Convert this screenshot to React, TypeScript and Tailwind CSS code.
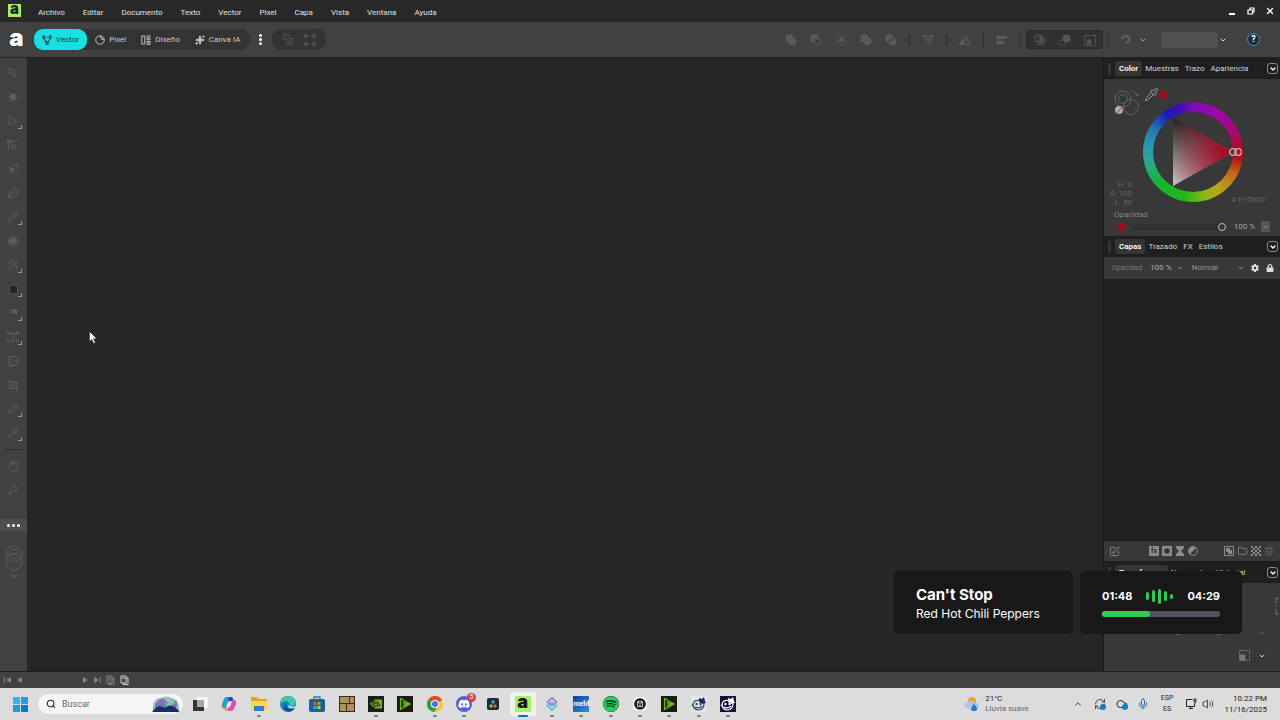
import React, { useState } from 'react';
import {
  ChevronDown, ChevronUp, Cloud, Folder, Hand, Image as ImageIcon, Mic, Pencil, Pipette, RefreshCw,
  Search, Sparkles, SquarePen, Trash2, Volume2, X, Wand2,
} from 'lucide-react';
import { FaDiscord, FaSpotify, FaLock } from 'react-icons/fa';
import { FaGear } from 'react-icons/fa6';
import { BsNvidia } from 'react-icons/bs';

const MENUS = ['Archivo', 'Editar', 'Documento', 'Texto', 'Vector', 'Píxel', 'Capa', 'Vista', 'Ventana', 'Ayuda'];

const VectorIcon = () => (
  <svg className="w-[10px] h-[10px]" viewBox="0 0 20 20" fill="none" stroke="currentColor" strokeWidth="2.2">
    <circle cx="3.500" cy="4" r="2.4" /><circle cx="16.500" cy="4" r="2.4" /><circle cx="10" cy="16.500" r="2.4" />
    <path d="M4 6.500c0 5 4 4 5 8M16 6.500c0 5-4 4-5 8M9 4.500h2" />
  </svg>
);

const PixelIcon = () => (
  <svg className="w-[10px] h-[10px]" viewBox="0 0 20 20" fill="none" stroke="currentColor" strokeWidth="1.8">
    <circle cx="10" cy="10" r="8.5" /><path d="M11 2v4h3v3h4" />
  </svg>
);

const LayoutIcon = () => (
  <svg className="w-[10px] h-[10px]" viewBox="0 0 20 20" fill="none" stroke="currentColor" strokeWidth="1.9">
    <path d="M1.5 2h6v16h-6zM11 2h8M12 5.500h6v4h-6zM11 13h8M11 16h8M11 18.500h8" />
  </svg>
);

const MODES = [
  { name: 'Vector', icon: <VectorIcon /> },
  { name: 'Píxel', icon: <PixelIcon /> },
  { name: 'Diseño', icon: <LayoutIcon /> },
  { name: 'Canva IA', icon: <Sparkles className="w-[10px] h-[10px]" fill="currentColor" /> },
];

/* Boolean operation glyphs */
const BoolIcon = ({ kind }: { kind: string }) => (
  <svg className="w-3 h-3" viewBox="0 0 24 24" fill="none" stroke="#5b5b5b" strokeWidth="2">
    {kind === 'add' && <><rect x="2" y="2" width="13" height="13" rx="2" fill="#5b5b5b" /><circle cx="15" cy="15" r="7" fill="#5b5b5b" /></>}
    {kind === 'subtract' && <><rect x="2" y="2" width="13" height="13" rx="2" fill="#5b5b5b" /><circle cx="15" cy="15" r="7" fill="#414141" /></>}
    {kind === 'intersect' && <><rect x="2" y="2" width="13" height="13" rx="2" strokeDasharray="3 2" /><circle cx="15" cy="15" r="7" strokeDasharray="3 2" /><path d="M15 8v7H8a7 7 0 0 1 7-7z" fill="#5b5b5b" /></>}
    {kind === 'xor' && <><rect x="2" y="2" width="13" height="13" rx="2" fill="#5b5b5b" /><circle cx="15" cy="15" r="7" fill="#5b5b5b" /><path d="M14 9v5H9q0-4 5-5z" fill="#333" /></>}
    {kind === 'divide' && <><rect x="2" y="2" width="13" height="13" rx="2" fill="#5b5b5b" /><circle cx="15" cy="15" r="7" fill="#5b5b5b" /><path d="M14 9v5H9q0-4 5-5z" stroke="#3c3c3c" /></>}
    {kind === 'behind' && <><rect x="2" y="2" width="13" height="13" rx="1" /><path d="M14 6a8 8 0 1 1-8 8M7 7h7v7" /><circle cx="14" cy="14" r="4" /></>}
  </svg>
);

const ToolGlyph = ({ children }: { children: React.ReactNode }) => (
  <svg className="w-3 h-3" viewBox="0 0 24 24" fill="none" stroke="currentColor" strokeWidth="2">{children}</svg>
);

const TOOLS: { name: string; icon: React.ReactNode; more?: boolean }[] = [
  { name: 'Mover', icon: <ToolGlyph><path d="M4 3l7 2 7 8-5 1 5 7M4 3v11l4-3 5 9h5" /></ToolGlyph> },
  { name: 'Mesa de trabajo', icon: <ToolGlyph><circle cx="12" cy="12" r="6" fill="currentColor" /><path d="M3 3l4 4M20 4l-3 3M3 21l4-4M21 21l-4-4M1 12h3M20 12h3M12 20v3" /></ToolGlyph> },
  { name: 'Nodo', more: true, icon: <ToolGlyph><path d="M5 3l15 11-9 1-6 6z" /></ToolGlyph> },
  { name: 'Esquina', icon: <ToolGlyph><path d="M3 22V5h19M1 2h6v6H1zM10 9l10 8-6 1-4 4z" /></ToolGlyph> },
  { name: 'Contorno', icon: <ToolGlyph><circle cx="11" cy="13" r="9" strokeDasharray="4 3" /><circle cx="11" cy="13" r="4" fill="currentColor" /><circle cx="20" cy="4" r="2" /></ToolGlyph> },
  { name: 'Pluma', icon: <ToolGlyph><path d="M2 22L5 10l8-7h6l3 4-2 8-7 6zM3 21l9-9" /><circle cx="13" cy="11" r="2" /></ToolGlyph> },
  { name: 'Lápiz', more: true, icon: <Pencil className="w-3 h-3" /> },
  { name: 'Relleno', icon: <ToolGlyph><rect x="3" y="3" width="18" height="18" rx="6" /><circle cx="12" cy="12" r="6" fill="currentColor" /></ToolGlyph> },
  { name: 'Varita', more: true, icon: <Wand2 className="w-3 h-3" /> },
  { name: 'Rectángulo', more: true, icon: <span className="w-[9px] h-[9px] bg-[#252525] border border-[#505050]" /> },
  { name: 'Transparencia', more: true, icon: <ToolGlyph><path d="M5 5h7v7H5z" strokeDasharray="2 2" /><path d="M10 5h9v9l-5-4-4 4z" fill="currentColor" /></ToolGlyph> },
  { name: 'Texto', more: true, icon: <ToolGlyph><path d="M1 2h4v4H1zM19 2h4v4h-4zM1 18h4v4H1zM19 18h4v4h-4zM6 7h12M12 7v14M9 21h6M5 4h14" /></ToolGlyph> },
  { name: 'Imagen', icon: <ImageIcon className="w-3 h-3" /> },
  { name: 'Recorte', icon: <ToolGlyph><path d="M5 1v18h18M1 5h18v18M5 19L19 5" /><path d="M9 9h6v6H9z" strokeDasharray="2 2" /></ToolGlyph> },
  { name: 'Medida', more: true, icon: <ToolGlyph><path d="M2 17L17 2l5 5L7 22zM14 5l5 5M6 18l2-2" /></ToolGlyph> },
  { name: 'Cuentagotas', more: true, icon: <Pipette className="w-3 h-3" /> },
];

const ToolButton = ({ name, icon, more }: { name: string; icon: React.ReactNode; more?: boolean }) => (
  <button aria-label={name} className="relative w-full h-6 shrink-0 pr-px flex items-center justify-center text-[#5c5c5c]">
    {icon}
    {more && <span className="absolute right-[5px] bottom-[4px] w-[4px] h-[4px] border-r border-b border-[#929292]" />}
  </button>
);

const Separator = () => <span className="w-px h-3 bg-[#2b2b2b]" />;

const PanelTabs = ({ tabs }: { tabs: string[] }) => (
  <header className="h-[21px] shrink-0 bg-[#1f1f1f] flex items-center pl-1 pr-[2px] text-[8px] text-[#d2d2d2]">
    <span className="w-[3px] h-3 bg-[#343434] mr-1" />
    <div className="flex items-center">
      {tabs.map((t, i) => (
        <button key={t} className={`h-[15px] rounded-[3px] ${i === 0 ? 'px-1 bg-[#353535] text-white font-semibold' : 'px-[3px]'}`}>{t}</button>
      ))}
    </div>
    <button aria-label="Opciones del panel" className="ml-auto w-[11px] h-[11px] rounded-[3px] border border-[#8a8a8a] flex items-center justify-center text-white">
      <ChevronDown className="w-2 h-2" strokeWidth={4} />
    </button>
  </header>
);

const ColorWheel = () => (
  <div className="relative w-[100px] h-[100px] rounded-full bg-[conic-gradient(#7a0cb4_0deg,#a406a4_35deg,#a3087a_60deg,#b00c28_85deg,#b50f16_98deg,#c06a18_118deg,#b9a51c_145deg,#8fb51a_165deg,#22b818_190deg,#18b52a_225deg,#28a88c_255deg,#289caa_275deg,#2478b4_300deg,#1c1cae_325deg,#3a10b4_342deg,#7a0cb4_360deg)]">
    <div className="absolute inset-[10px] rounded-full bg-[#383838]" />
    <svg className="absolute inset-0 w-full h-full overflow-visible" viewBox="0 0 100 100">
      <defs>
        <linearGradient id="shade" x1="0" y1="0" x2="0" y2="1">
          <stop offset="0" stopColor="#202020" /><stop offset="1" stopColor="#cfc6c8" />
        </linearGradient>
        <linearGradient id="hue" x1="0" y1="0" x2="1" y2="0">
          <stop offset="0" stopColor="#a80a24" stopOpacity="0" /><stop offset="0.85" stopColor="#a80a24" />
        </linearGradient>
      </defs>
      <path d="M30 16v68l60-34z" fill="url(#shade)" />
      <path d="M30 16v68l60-34z" fill="url(#hue)" />
      <g fill="none" stroke="#c9b4b4" strokeWidth="1.2">
        <circle cx="90" cy="50" r="3.300" /><circle cx="95" cy="50" r="3.300" />
      </g>
    </svg>
  </div>
);

const ColorPanel = () => {
  const [opacity, setOpacity] = useState(100);
  return (
    <section>
      <PanelTabs tabs={['Color', 'Muestras', 'Trazo', 'Apariencia']} />
      <div className="h-[157px] pt-2 pl-[10px] pr-[10px] text-[8px] text-[#a5a5a5] flex flex-col">
        <div className="relative flex">
          <svg className="w-[26px] h-[28px]" viewBox="0 0 26 28" fill="none" stroke="#616161" strokeWidth="1">
            <circle cx="9" cy="12" r="8" /><circle cx="9" cy="12" r="4.500" /><circle cx="17" cy="20" r="7.500" />
            <path d="M17 4q5 0 6 5m-2-2l2 2 2-2" />
            <circle cx="5" cy="23" r="4" fill="#b9a8ac" stroke="none" /><path d="M3 26l5-6" stroke="#9b3344" />
          </svg>
          <Pipette className="w-[15px] h-[15px] ml-1 text-[#a3a3a3]" strokeWidth={1.6} />
          <span className="w-2 h-2 rounded-full bg-[#a00d22] mt-1" />
          <div className="absolute left-[29px] top-[15px]"><ColorWheel /></div>
        </div>
        <div className="mt-[65px] flex justify-between items-end text-[#636363] leading-[9px]">
          <div className="w-[18px] flex flex-col items-end whitespace-nowrap">
            <div>H: 0</div><div>S: 100</div><div>L: 50</div>
          </div>
          <span className="pr-[5px] pb-[3px]"># FF0000</span>
        </div>
        <label htmlFor="opacity" className="mt-[3px] leading-[10px] text-[#858585]">Opacidad</label>
        <div className="flex items-center h-[13px] pl-1">
          <span className="w-2 h-2 mr-[6px] rounded-full bg-[#a00d22]" />
          <input
            id="opacity"
            type="range"
            value={opacity}
            onChange={e => setOpacity(Number(e.target.value))}
            className="flex-1 min-w-0 h-[6px] rounded-full appearance-none bg-[#303030] [&::-webkit-slider-thumb]:appearance-none [&::-webkit-slider-thumb]:w-2 [&::-webkit-slider-thumb]:h-2 [&::-webkit-slider-thumb]:rounded-full [&::-webkit-slider-thumb]:border [&::-webkit-slider-thumb]:border-[#c4c4c4] [&::-webkit-slider-thumb]:bg-[#333]"
          />
          <span className="ml-2">{opacity} %</span>
          <button aria-label="Ajustar opacidad" className="ml-[6px] w-[9px] h-[11px] bg-[#555] flex items-center justify-center"><ChevronDown className="w-2 h-2" /></button>
        </div>
      </div>
    </section>
  );
};

const LayersPanel = () => (
  <section className="flex-1 flex flex-col min-h-0">
    <PanelTabs tabs={['Capas', 'Trazado', 'FX', 'Estilos']} />
    <div className="h-[22px] shrink-0 flex items-center pl-2 pr-[6px] text-[8px] text-[#b0b0b0]">
      <span className="text-[7px] text-[#7d7d7d]">Opacidad:</span>
      <span className="ml-[7px]">100 %</span>
      <ChevronDown className="w-2 h-2 ml-1" />
      <div className="ml-2 flex-1 min-w-0 flex items-center">
        <select aria-label="Modo de fusión" className="flex-1 min-w-0 h-4 appearance-none bg-transparent text-[#969696]"><option>Normal</option></select>
        <ChevronDown className="w-2 h-2" />
      </div>
      <button aria-label="Ajustes de capa" className="ml-[6px] text-[#dedede]"><FaGear className="w-2 h-2" /></button>
      <button aria-label="Bloquear" className="ml-[7px] text-[#dedede]"><FaLock className="w-2 h-2" /></button>
    </div>
    <div className="flex-1 bg-[#202020]" />
    <div className="h-[21px] shrink-0 flex items-center pl-[5px] pr-[6px] text-[#8b8b8b] border-b border-[#1c1c1c]">
      <button aria-label="Editar"><SquarePen className="w-[11px] h-[11px]" /></button>
      <div className="ml-auto flex gap-[3px]">
        <button aria-label="Efectos" className="w-[10px] h-[10px] bg-[#8b8b8b] text-[7px] leading-[9px] font-bold text-[#333]">fx</button>
        <button aria-label="Máscara"><svg className="w-[10px] h-[10px]" viewBox="0 0 10 10"><rect width="10" height="10" fill="currentColor" /><circle cx="5" cy="5" r="2.700" fill="#333" /></svg></button>
        <button aria-label="Filtro"><svg className="w-[10px] h-[10px]" viewBox="0 0 10 10" fill="currentColor"><path d="M1 0h8v2L6 5l3 3v2H1V8l3-3-3-3z" /></svg></button>
        <button aria-label="Ajuste"><svg className="w-[10px] h-[10px]" viewBox="0 0 10 10"><circle cx="5" cy="5" r="4.400" fill="none" stroke="currentColor" /><path d="M8.200 1.800a4.500 4.500 0 0 0-6.400 6.400z" fill="currentColor" /></svg></button>
      </div>
      <div className="ml-[26px] flex gap-[3px]">
        <button aria-label="Nueva capa"><svg className="w-[10px] h-[10px]" viewBox="0 0 10 10"><path d="M.5.5h9v9h-9z" fill="none" stroke="currentColor" /><path d="M2 2h4v2h2v4H4V6H2z" fill="currentColor" /></svg></button>
        <button aria-label="Grupo"><Folder className="w-[11px] h-[10px]" /></button>
        <button aria-label="Píxeles"><svg className="w-[10px] h-[10px]" viewBox="0 0 10 10" fill="currentColor"><path d="M0 0h2v2H0zM4 0h2v2H4zM8 0h2v2H8zM2 2h2v2H2zM6 2h2v2H6zM0 4h2v2H0zM4 4h2v2H4zM8 4h2v2H8zM2 6h2v2H2zM6 6h2v2H6zM0 8h2v2H0zM4 8h2v2H4zM8 8h2v2H8z" /></svg></button>
        <button aria-label="Eliminar" className="text-[#696969]"><Trash2 className="w-[10px] h-[10px]" /></button>
      </div>
    </div>
  </section>
);

const TransformPanel = () => (
  <section className="h-[109px] shrink-0 flex flex-col">
    <PanelTabs tabs={['Transformar', 'Navegador', 'Historial']} />
    <div className="flex-1 flex flex-col justify-between items-end pt-3 pb-[10px] text-[#777]">
      <svg className="w-[6px] h-[22px]" viewBox="0 0 6 22" fill="none" stroke="currentColor"><path d="M5 3H2v5M2 14v5h3M1 11h1" /></svg>
      <div className="flex flex-col gap-3 pr-[14px] items-end">
        <div className="flex items-center gap-8 text-[8px] leading-[10px]">
          <span>0 °</span><span>0 °</span>
          <ChevronDown className="w-2 h-2" />
        </div>
        <div className="flex items-center gap-2">
          <svg className="w-[11px] h-[11px]" viewBox="0 0 11 11" fill="none" stroke="currentColor"><path d="M.5.5h10v10h-10z" strokeDasharray="2 1" /><path d="M1 5h5v5H1z" fill="currentColor" /></svg>
          <ChevronDown className="w-2 h-2 text-[#d0d0d0]" strokeWidth={3} />
        </div>
      </div>
    </div>
  </section>
);

const BARS = ['h-2', 'h-3', 'h-[15px]', 'h-[10px]', 'h-[5px]'];

const NowPlaying = () => (
  <aside className="absolute right-[38px] bottom-[86px] flex gap-[7px] text-white font-['Inter',sans-serif]">
    <div className="w-[179px] h-[63px] rounded-[5px] bg-[#181818] pl-[22px] pt-[2px] flex flex-col justify-center">
      <p className="text-[15px] leading-5 font-bold">Can't Stop</p>
      <p className="text-[12px] leading-[18px]">Red Hot Chili Peppers</p>
    </div>
    <div className="w-[162px] h-[63px] rounded-[5px] bg-[#181818] px-[22px] pt-[17px]">
      <div className="h-4 flex items-center justify-between text-[11px] font-bold">
        <span>01:48</span>
        <div className="flex items-center gap-[3px]">
          {BARS.map((h, i) => <span key={i} className={`w-[3px] rounded-full bg-[#2fcb55] ${h}`} />)}
        </div>
        <span>04:29</span>
      </div>
      <div className="mt-[7px] h-[6px] rounded-full bg-[#505461]">
        <div className="h-full w-[41%] rounded-full bg-[#2fcb55]" />
      </div>
    </div>
  </aside>
);

const StreamIcon = () => (
  <svg className="w-4 h-4" viewBox="0 0 16 16"><path d="M0 0h16v16H0z" fill="#171c17" /><path d="M3.500 2.500L13 8l-9.500 5.500zM5.500 6l6 2-6 0M5.500 10.500L11 8" fill="none" stroke="#76b817" strokeWidth="1.200" /></svg>
);

const CatIcon = ({ dark }: { dark?: boolean }) => (
  <svg className="w-4 h-4" viewBox="0 0 16 16">
    <path d="M0 0h16v16H0z" fill={dark ? '#130f3b' : '#e4e6ef'} />
    <g fill="none" stroke={dark ? '#fff' : '#374568'} strokeWidth="1.200">
      <path d="M8 4.500Q3 4 2 8L1 10M2 8q0 6 6 6 5-1 5-6M4 11q4 2 7-1" /><circle cx="5.500" cy="8" r=".6" /><circle cx="9.500" cy="8" r=".6" />
    </g>
    <path d="M8 2l3 1 2-2 1 4 1 2-3 1-4-2z" fill={dark ? '#fff' : '#202b62'} />
  </svg>
);

const APPS: { name: string; open?: boolean; active?: boolean; icon: React.ReactNode }[] = [
  { name: 'Vista de tareas', icon: <svg className="w-4 h-4" viewBox="0 0 16 16"><path d="M5 1h11v11H5z" fill="#f7f7f7" /><path d="M1 4h4v7h7v4H1z" fill="#343434" /><path d="M5 4h7v7H5z" fill="#a8a8a8" /></svg> },
  { name: 'Copilot', icon: <svg className="w-4 h-4" viewBox="0 0 16 16"><path d="M5 1h5q2 0 2 2l1 2H9Q7 5 6 8l-1 4H3Q0 12 1 8l2-5q1-2 2-2z" fill="#259fd8" /><path d="M8 1h2q2 0 2 2l1 2H9q-2 0-2-2z" fill="#3044ba" /><path d="M13 4q3 0 2 4l-2 5q-1 2-3 2H6q-2 0-2-3h3q2 0 3-3l1-5z" fill="#d453b3" /><path d="M1 9l1 3h5q-1 3 2 3H6q-2 0-3-2-3 0-2-4z" fill="#e9a83c" /><path d="M7 7h2L8 10H6z" fill="#eee" /></svg> },
  { name: 'Explorador', open: true, icon: <svg className="w-4 h-4" viewBox="0 0 16 16"><path d="M0 2q0-1 1-1h5l2 2h7q1 0 1 1v10H0z" fill="#e2a322" /><path d="M0 5h16v9q0 1-1 1H1q-1 0-1-1z" fill="#ffd557" /><path d="M3 10h10v5H3z" fill="#2585cc" /></svg> },
  { name: 'Edge', icon: <svg className="w-4 h-4" viewBox="0 0 16 16"><circle cx="8" cy="8" r="8" fill="#1682c5" /><path d="M0 8C0 2 4 0 8 0c5 0 8 3 8 6 0 4-5 5-7 3 2-3-4-6-9-1z" fill="#40c5a6" /><path d="M6 8c0 5 4 6 9 4-3 5-11 5-11-1 0-2 1-3 2-3z" fill="#0b4f9c" /><path d="M9 9q2 3 7 1l-1 2q-5 1-7-1z" fill="#dadada" /></svg> },
  { name: 'Store', icon: <svg className="w-4 h-4" viewBox="0 0 16 16"><path d="M5 4V1h6v3" fill="none" stroke="#1b84be" strokeWidth="1.300" /><rect y="3" width="16" height="13" rx="2" fill="#176395" /><path d="M4.500 6h3v3h-3z" fill="#ee5a35" /><path d="M8.500 6h3v3h-3z" fill="#82b729" /><path d="M4.500 10h3v3h-3z" fill="#2bacee" /><path d="M8.500 10h3v3h-3z" fill="#f5bb2b" /></svg> },
  { name: 'Mosaico', icon: <svg className="w-4 h-4" viewBox="0 0 16 16"><path d="M0 0h16v16H0z" fill="#36291d" /><path d="M1 1h9v6H1zM11 1h4v6h-4zM1 8h6v7H1zM8 8h7v7H8z" fill="#ad935b" /></svg> },
  { name: 'NVIDIA', open: true, icon: <span className="w-4 h-4 bg-[#1a1f18] flex items-center justify-center"><BsNvidia className="w-3 h-3 text-[#76b817]" /></span> },
  { name: 'Broadcast', icon: <StreamIcon /> },
  { name: 'Chrome', open: true, icon: <svg className="w-4 h-4" viewBox="0 0 16 16"><circle cx="8" cy="8" r="8" fill="#f4c32e" /><path d="M8 8L1 4a8 8 0 0 1 14 0z" fill="#df4939" /><path d="M1 4a8 8 0 0 0 6 12l4-6-3-2z" fill="#319c52" /><circle cx="8" cy="8" r="4" fill="#fff" /><circle cx="8" cy="8" r="3" fill="#3679df" /></svg> },
  { name: 'Discord', open: true, icon: <span className="relative w-4 h-4 rounded-full bg-[#5560df] flex items-center justify-center"><FaDiscord className="w-3 h-3 text-white" /><span className="absolute -right-[4px] -top-[3px] w-[9px] h-[9px] rounded-full bg-[#d43f45] text-white text-[7px] leading-[9px] text-center">5</span></span> },
  { name: 'Resolve', icon: <svg className="w-3 h-3" viewBox="0 0 12 12"><rect width="12" height="12" rx="2" fill="#202b35" /><circle cx="6" cy="4" r="1.700" fill="#36afd6" /><circle cx="4" cy="8" r="1.700" fill="#91bd56" /><circle cx="8" cy="8" r="1.700" fill="#df5b50" /></svg> },
  { name: 'Affinity', open: true, active: true, icon: <span className="w-4 h-4 bg-[#a7f35b] text-[#121212] text-[18px] leading-[12px] font-black text-center font-['Inter',sans-serif]">a</span> },
  { name: 'Shapes', open: true, icon: <svg className="w-[14px] h-[14px]" viewBox="0 0 16 16" fill="none" strokeWidth="2"><path d="M3 6l5-5 5 5-5 4z" stroke="#9877e6" /><path d="M3 10l5-4 5 4-5 5z" stroke="#55bce2" /></svg> },
  { name: 'Meld', open: true, icon: <span className="w-4 h-4 bg-linear-to-br from-[#183e9d] to-[#2b91e2] text-white text-[7px] leading-4 font-bold text-center">meld</span> },
  { name: 'Spotify', open: true, icon: <span className="w-4 h-4 rounded-full bg-[#15291b]"><FaSpotify className="w-4 h-4 text-[#27cd5f]" /></span> },
  { name: 'Grabadora', open: true, icon: <svg className="w-[14px] h-[14px]" viewBox="0 0 14 14"><rect width="14" height="14" rx="3" fill="#f3f3f3" /><circle cx="7" cy="7" r="5.800" fill="#1a1a1a" /><path d="M4.500 4.500h5v5h-5zM5 5l2 2 2-2M7 7v2" fill="none" stroke="#eee" strokeWidth=".8" /></svg> },
  { name: 'Stream', open: true, icon: <StreamIcon /> },
  { name: 'Gato', open: true, icon: <CatIcon /> },
  { name: 'Gato oscuro', open: true, icon: <CatIcon dark /> },
];

const Taskbar = () => (
  <footer className="h-8 shrink-0 bg-[#dcdcdc] flex items-center pl-[13px] pr-[13px] text-[8px] text-[#222]">
    <button aria-label="Inicio" className="grid grid-cols-2 gap-px">
      <span className="w-[7px] h-[7px] bg-[#37b4ec]" /><span className="w-[7px] h-[7px] bg-[#259ddd]" />
      <span className="w-[7px] h-[7px] bg-[#209cdd]" /><span className="w-[7px] h-[7px] bg-[#087ccb]" />
    </button>
    <label className="ml-[10px] w-[145px] h-5 rounded-full bg-[#f5f5f5] flex items-center pl-2 pr-[3px] overflow-hidden">
      <Search className="w-[10px] h-[10px] shrink-0" strokeWidth={2.5} />
      <input type="text" aria-label="Buscar" placeholder="Buscar" className="ml-[6px] flex-1 min-w-0 h-4 text-[9px] outline-none placeholder:text-[#666]" />
      <svg className="w-7 h-4 shrink-0" viewBox="0 0 28 16">
        <path d="M1 14Q0 3 8 2q6-3 12 0 8 2 7 12z" fill="#95bbd0" /><path d="M3 9Q9-1 14 5t10-1q3 7-2 8H3z" fill="#7e72b7" /><path d="M11 5q4 6 10-2l2 5-8 3z" fill="#67c9af" /><path d="M15 8l4-3 1 4z" fill="#dfa55b" /><path d="M0 16q6-9 13-4l3-2q5-2 12 6z" fill="#18305e" />
      </svg>
    </label>
    <nav className="ml-[3px] w-[556px] h-full flex justify-between">
      {APPS.map(a => (
        <button key={a.name} aria-label={a.name} className="relative w-7 h-full flex items-center justify-center">
          {a.active && <span className="absolute inset-x-px inset-y-1 rounded-[3px] bg-[#f0f0f0]" />}
          <span className="relative flex">{a.icon}</span>
          {a.open && <span className={`absolute bottom-[3px] h-[2px] rounded-full ${a.active ? 'w-[10px] bg-[#1270bb]' : 'w-[4px] bg-[#808080]'}`} />}
        </button>
      ))}
    </nav>
    <button className="ml-auto flex items-center gap-[5px] text-left leading-[10px]">
      <svg className="w-4 h-4" viewBox="0 0 16 16"><circle cx="8" cy="5" r="4" fill="#eda32c" /><path d="M3 12a3 3 0 0 1 1-6q4-3 6 1 5-1 5 3t-4 4z" fill="#a9c7e9" /><path d="M10 15q-3 0-3-2 1-3 3-5 3 3 3 5 0 2-3 2z" fill="#2877ce" /></svg>
      <span>21°C<span className="block text-[#686868]">Lluvia suave</span></span>
    </button>
    <div className="ml-[44px] flex items-center">
      <button aria-label="Iconos ocultos"><ChevronUp className="w-[10px] h-[10px]" /></button>
      <button aria-label="Sincronizar" className="relative ml-[11px]"><RefreshCw className="w-3 h-3" strokeWidth={1.500} /><span className="absolute right-0 bottom-0 w-[6px] h-[6px] rounded-full bg-[#147dca]" /></button>
      <button aria-label="OneDrive" className="relative ml-[10px]"><Cloud className="w-3 h-3" strokeWidth={2} /><span className="absolute right-0 bottom-0 w-[6px] h-[6px] rounded-full bg-[#147dca]" /></button>
      <button aria-label="Micrófono" className="ml-[9px] text-[#3567a5]"><Mic className="w-3 h-3" /></button>
    </div>
    <button className="ml-[12px] text-center text-[7px] leading-[11px]">ESP<br />ES</button>
    <div className="ml-[12px] flex gap-[5px]">
      <svg className="w-3 h-3" viewBox="0 0 12 12" fill="none" stroke="currentColor"><path d="M7.500 1.500h-6v7h8V6M4 10.500h4M5.500 8.500v2" /><path d="M9 1h2v2.500H9zM10 3.500V6" /></svg>
      <Volume2 className="w-3 h-3" strokeWidth={1.600} />
    </div>
    <button className="ml-[10px] text-right leading-[11px] whitespace-nowrap">10:22 PM<br />11/16/2025</button>
  </footer>
);

export default function App() {
  const [mode, setMode] = useState('Vector');

  return (
    <div className="relative h-screen flex flex-col overflow-hidden bg-[#262626] text-[#c9c9c9] font-['Roboto','Noto_Sans',sans-serif]">
      {/* Menu bar */}
      <header className="h-[22px] shrink-0 bg-[#282828] flex items-center pl-2 text-[8px] text-[#e2e2e2]">
        <span className="w-[13px] h-[13px] mb-[2px] bg-[#a5f069] text-[#1c251a] text-[15px] leading-[10px] font-black text-center font-['Inter',sans-serif]">a</span>
        <nav className="ml-[17px] mt-[3px] flex gap-[18px]">
          {MENUS.map(m => <button key={m}>{m}</button>)}
        </nav>
        <div className="ml-auto pr-[5px] flex items-center gap-[9px] text-white">
          <button aria-label="Minimizar" className="w-[10px] h-2 flex items-end justify-center"><span className="w-[6px] h-[2px] bg-white" /></button>
          <button aria-label="Restaurar"><svg className="w-[10px] h-[10px]" viewBox="0 0 10 10" fill="none" stroke="currentColor" strokeWidth="1.200"><path d="M2 4h4.500v4H2zM4 4V2h4v4H6.500" /></svg></button>
          <button aria-label="Cerrar"><X className="w-[10px] h-[10px]" strokeWidth={3} /></button>
        </div>
      </header>

      {/* Context toolbar */}
      <div className="h-9 shrink-0 bg-[#414141] border-b border-[#222] flex items-center pl-[9px] pr-5 text-[8px]">
        <span className="w-[15px] text-center text-white text-[24px] leading-[20px] font-black font-['Inter',sans-serif] pb-1">a</span>
        <div className="ml-[10px] h-[21px] rounded-[9px] bg-[#333] flex items-center gap-px pr-[3px]">
          {MODES.map(m => (
            <button
              key={m.name}
              onClick={() => setMode(m.name)}
              className={`h-[21px] rounded-[9px] flex items-center gap-1 whitespace-nowrap ${mode === m.name ? 'px-2 bg-[#17dfe2] text-[#123a3d]' : 'px-[7px] text-[#c9c9c9]'}`}
            >
              {m.icon}{m.name}
            </button>
          ))}
        </div>
        <button aria-label="Más estudios" className="ml-[4px] w-3 h-4 flex flex-col items-center justify-center gap-px">
          {[0, 1, 2].map(i => <span key={i} className="w-[3px] h-[3px] rounded-full bg-white" />)}
        </button>
        <div className="ml-[6px] h-[21px] w-[54px] rounded-[9px] bg-[#333] flex items-center justify-evenly text-[#505050]">
          <button aria-label="Copiar estilo"><ToolGlyph><path d="M3 11V2h11v4M3 11h4M9 9h13v13H9z" /><path d="M12 19l4-7 3 7M13 17h5" /></ToolGlyph></button>
          <button aria-label="Seleccionar"><ToolGlyph><path d="M4 4h16v16H4z" strokeDasharray="3 2" /><path d="M1 1h5v5H1zM18 1h5v5h-5zM1 18h5v5H1zM18 18h5v5h-5z" fill="currentColor" /></ToolGlyph></button>
        </div>

        <div className="ml-auto flex items-center text-[#5b5b5b]">
          <div className="flex gap-[13px]">
            {['add', 'subtract', 'intersect', 'xor', 'divide'].map(k => <button key={k} aria-label={k}><BoolIcon kind={k} /></button>)}
          </div>
          <div className="ml-3 flex items-center gap-3">
            <Separator />
            <button aria-label="Ordenar nodos"><ToolGlyph><path d="M2 3h5v5H2zM7 5h14M17 3h5v5h-5zM5 8l14 14M19 8L8 19M9 11h8v6" /></ToolGlyph></button>
            <Separator />
            <button aria-label="Voltear"><svg className="w-3 h-3" viewBox="0 0 12 12" fill="currentColor"><path d="M5 2v9H0z" /><path d="M7 2v9h4z" fill="none" stroke="currentColor" /></svg></button>
            <Separator />
            <button aria-label="Alinear"><svg className="w-3 h-3" viewBox="0 0 12 12" fill="currentColor"><path d="M1 1h1v10H1zM2 2h9v3H2zM2 7h6v3H2z" /></svg></button>
            <Separator />
          </div>
          <div className="ml-[5px] h-[19px] w-[77px] rounded-[3px] bg-[#303030] border border-[#2a2a2a] flex items-center justify-around">
            <button aria-label="Insertar detrás"><BoolIcon kind="behind" /></button>
            <button aria-label="Insertar encima"><svg className="w-3 h-3" viewBox="0 0 12 12"><circle cx="7.500" cy="4.500" r="4" fill="#555" /><path d="M1 6h5v5H1z" fill="none" stroke="#555" strokeDasharray="2 1" /></svg></button>
            <button aria-label="Insertar dentro"><svg className="w-3 h-3" viewBox="0 0 12 12" fill="none" stroke="#555"><path d="M.5 1.500h11v10H.5z" strokeDasharray="6 1" /><path d="M3 6h4v4H3z" fill="#555" /></svg></button>
          </div>
          <div className="ml-[4px] flex items-center"><Separator /></div>
          <button aria-label="Ajuste magnético" className="ml-3"><svg className="w-3 h-3" viewBox="0 0 24 24" fill="none" stroke="currentColor" strokeWidth="5"><path d="M4 11q1-7 8-7 8 1 7 8l-6 7" /></svg></button>
          <ChevronDown className="ml-[7px] w-2 h-2 text-[#999]" strokeWidth={3} />
          <div className="ml-[14px] flex items-center">
            <select aria-label="Ajuste preestablecido" className="w-[57px] h-4 rounded-[2px] appearance-none bg-[#505050]" />
            <ChevronDown className="w-2 h-2 ml-px text-[#d5d5d5]" strokeWidth={3} />
          </div>
          <button aria-label="Ayuda" className="ml-[20px] w-[13px] h-[13px] rounded-full border border-[#3d8ede] bg-[#202a33] text-white text-[9px] leading-[11px] font-bold">?</button>
        </div>
      </div>

      {/* Workspace */}
      <div className="flex-1 min-h-0 flex">
        <aside className="w-[27px] shrink-0 bg-[#414141] pt-[3px] flex flex-col items-center">
          {TOOLS.map(t => <ToolButton key={t.name} name={t.name} icon={t.icon} more={t.more} />)}
          <span className="w-[18px] h-px my-1 shrink-0 bg-[#2b2b2b]" />
          <ToolButton name="Mano" icon={<Hand className="w-3 h-3" />} />
          <ToolButton name="Zoom" icon={<ToolGlyph><circle cx="14" cy="9" r="6" /><path d="M10 14l-7 7M3 15l6 6M2 17l5 5M14 6l3 3" /></ToolGlyph>} />
          <button aria-label="Más herramientas" className="mt-[17px] w-full h-3 shrink-0 bg-[#4e4e4e] flex items-center justify-center gap-[2px]">
            {[0, 1, 2].map(i => <span key={i} className="w-[3px] h-[3px] rounded-full bg-white" />)}
          </button>
          <button aria-label="Colores" className="mt-[14px] flex flex-col items-center text-[#5a5a5a]">
            <svg className="w-[18px] h-[26px]" viewBox="0 0 18 26" fill="none" stroke="currentColor"><circle cx="9" cy="9" r="8" /><circle cx="9" cy="9" r="4.500" /><path d="M6 9h6" /><circle cx="9" cy="17" r="8" /></svg>
            <ChevronDown className="w-[10px] h-[10px]" strokeWidth={3} />
          </button>
        </aside>

        <main className="relative flex-1 min-w-0">
          {/* Pointer */}
          <svg className="absolute left-[62px] top-[273px] w-[9px] h-[14px]" viewBox="0 0 9 14"><path d="M.5.5v10l2.300-2 1.900 4 1.700-.8-1.800-3.900h3.200z" fill="#fff" stroke="#222" strokeWidth=".5" /></svg>
        </main>

        <aside className="w-[177px] shrink-0 bg-[#383838] border-l border-[#171717] flex flex-col">
          <ColorPanel />
          <LayersPanel />
          <TransformPanel />
        </aside>
      </div>

      {/* Page navigation */}
      <div className="h-[17px] shrink-0 bg-[#414141] border-t border-[#1d1d1d] flex items-center pl-1 text-[#858585]">
        <button aria-label="Primera página"><svg className="w-2 h-2" viewBox="0 0 8 8" fill="currentColor"><path d="M0 1h1v6H0zM7 1v6L2 4z" /></svg></button>
        <button aria-label="Anterior" className="ml-1"><svg className="w-2 h-2" viewBox="0 0 8 8" fill="currentColor"><path d="M6 1v6L1 4z" /></svg></button>
        <button aria-label="Siguiente" className="ml-[57px]"><svg className="w-2 h-2" viewBox="0 0 8 8" fill="currentColor"><path d="M2 1v6l5-3z" /></svg></button>
        <button aria-label="Última página" className="ml-1"><svg className="w-2 h-2" viewBox="0 0 8 8" fill="currentColor"><path d="M1 1v6l5-3zM7 1h1v6H7z" /></svg></button>
        <button aria-label="Páginas" className="ml-[5px]"><svg className="w-[9px] h-[10px]" viewBox="0 0 9 10" fill="none" stroke="currentColor"><path d="M1 1h5v7H1zM3 8v1.500h5V3H6M2 3h3M2 5h3" /></svg></button>
        <button aria-label="Duplicar página" className="ml-[5px] text-[#d0d0d0]"><svg className="w-[9px] h-[10px]" viewBox="0 0 9 10" fill="none" stroke="currentColor"><path d="M1 1h5v7H1zM3 8v1.500h5V3H6M2 3h3" /></svg></button>
      </div>

      <Taskbar />
      <NowPlaying />
    </div>
  );
}
